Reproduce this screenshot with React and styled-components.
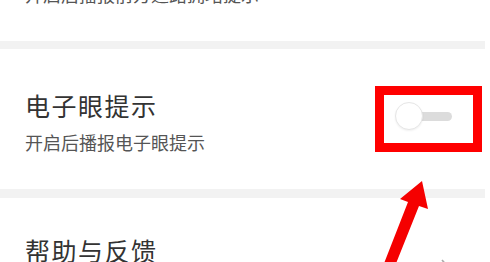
import React from 'react';
import styled, { createGlobalStyle } from 'styled-components';

const GlobalStyle = createGlobalStyle`
  html, body {
    margin: 0;
    padding: 0;
    background: #fff;
    overflow: hidden;
  }
  body {
    font-family: "Noto Sans CJK SC", "Noto Sans", sans-serif;
  }
`;

const Page = styled.div`
  position: relative;
  width: 490px;
  height: 262px;
  overflow: hidden;
  background: #fff;
`;

const List = styled.div`
  width: 485px;
  display: flex;
  flex-direction: column;
`;

const Gap = styled.div`
  height: ${(p) => p.h}px;
  background: #f2f2f2;
`;

const Row = styled.div`
  height: ${(p) => p.h}px;
  padding: 0 3px 0 25px;
  display: flex;
  flex-direction: row;
  align-items: ${(p) => p.align || 'center'};
  justify-content: space-between;
  overflow: hidden;
  box-sizing: border-box;
`;

const TextCol = styled.div`
  display: flex;
  flex-direction: column;
  margin-top: ${(p) => p.offset || 0}px;
`;

const Title = styled.div`
  font-size: 25px;
  line-height: 30px;
  color: #333;
  letter-spacing: 1.5px;
`;

const Desc = styled.div`
  font-size: 18px;
  line-height: 22px;
  color: #555;
  margin-top: ${(p) => p.gap || 0}px;
`;

const Highlight = styled.div`
  width: 107px;
  height: 66px;
  box-sizing: border-box;
  border: 9px solid #f00;
  padding: 7px 21px 13px 11px;
  display: flex;
  align-items: flex-start;
`;

const Switch = styled.div`
  position: relative;
  width: 57px;
  height: 28px;
`;

const Track = styled.div`
  position: absolute;
  left: 10px;
  right: 0;
  top: 10px;
  height: 9px;
  border-radius: 5px;
  background: #dcdcdc;
`;

const Knob = styled.div`
  position: absolute;
  left: 0;
  top: 0;
  width: 28px;
  height: 28px;
  box-sizing: border-box;
  border-radius: 50%;
  background: #fff;
  border: 1px solid #e6e6e6;
  box-shadow: 0 1px 2px rgba(0, 0, 0, 0.06);
`;

const Chevron = styled.svg`
  margin-top: 60px;
  margin-right: 28px;
`;

const Arrow = styled.svg`
  position: absolute;
  left: 0;
  top: 0;
  pointer-events: none;
`;

export default function App() {
  return (
    <Page>
      <GlobalStyle />
      <List>
        <Row h={41} align="flex-start">
          <TextCol offset={-17}>
            <Desc>开启后播报前方道路拥堵提示</Desc>
          </TextCol>
        </Row>
        <Gap h={8} />
        <Row h={140}>
          <TextCol offset={4}>
            <Title>电子眼提示</Title>
            <Desc gap={11}>开启后播报电子眼提示</Desc>
          </TextCol>
          <Highlight>
            <Switch>
              <Track />
              <Knob />
            </Switch>
          </Highlight>
        </Row>
        <Gap h={9} />
        <Row h={80} align="flex-start">
          <TextCol offset={37}>
            <Title>帮助与反馈</Title>
          </TextCol>
          <Chevron width="14" height="24" viewBox="0 0 14 24">
            <path d="M2 2 L11 12 L2 22" fill="none" stroke="#aaa" strokeWidth="1.6" />
          </Chevron>
        </Row>
      </List>
      <Arrow width="490" height="262" viewBox="0 0 490 262">
        <polygon
          points="422,181 428,209 419,206 395,266 383,266 408,202 400,199"
          fill="#f50000"
        />
      </Arrow>
    </Page>
  );
}
